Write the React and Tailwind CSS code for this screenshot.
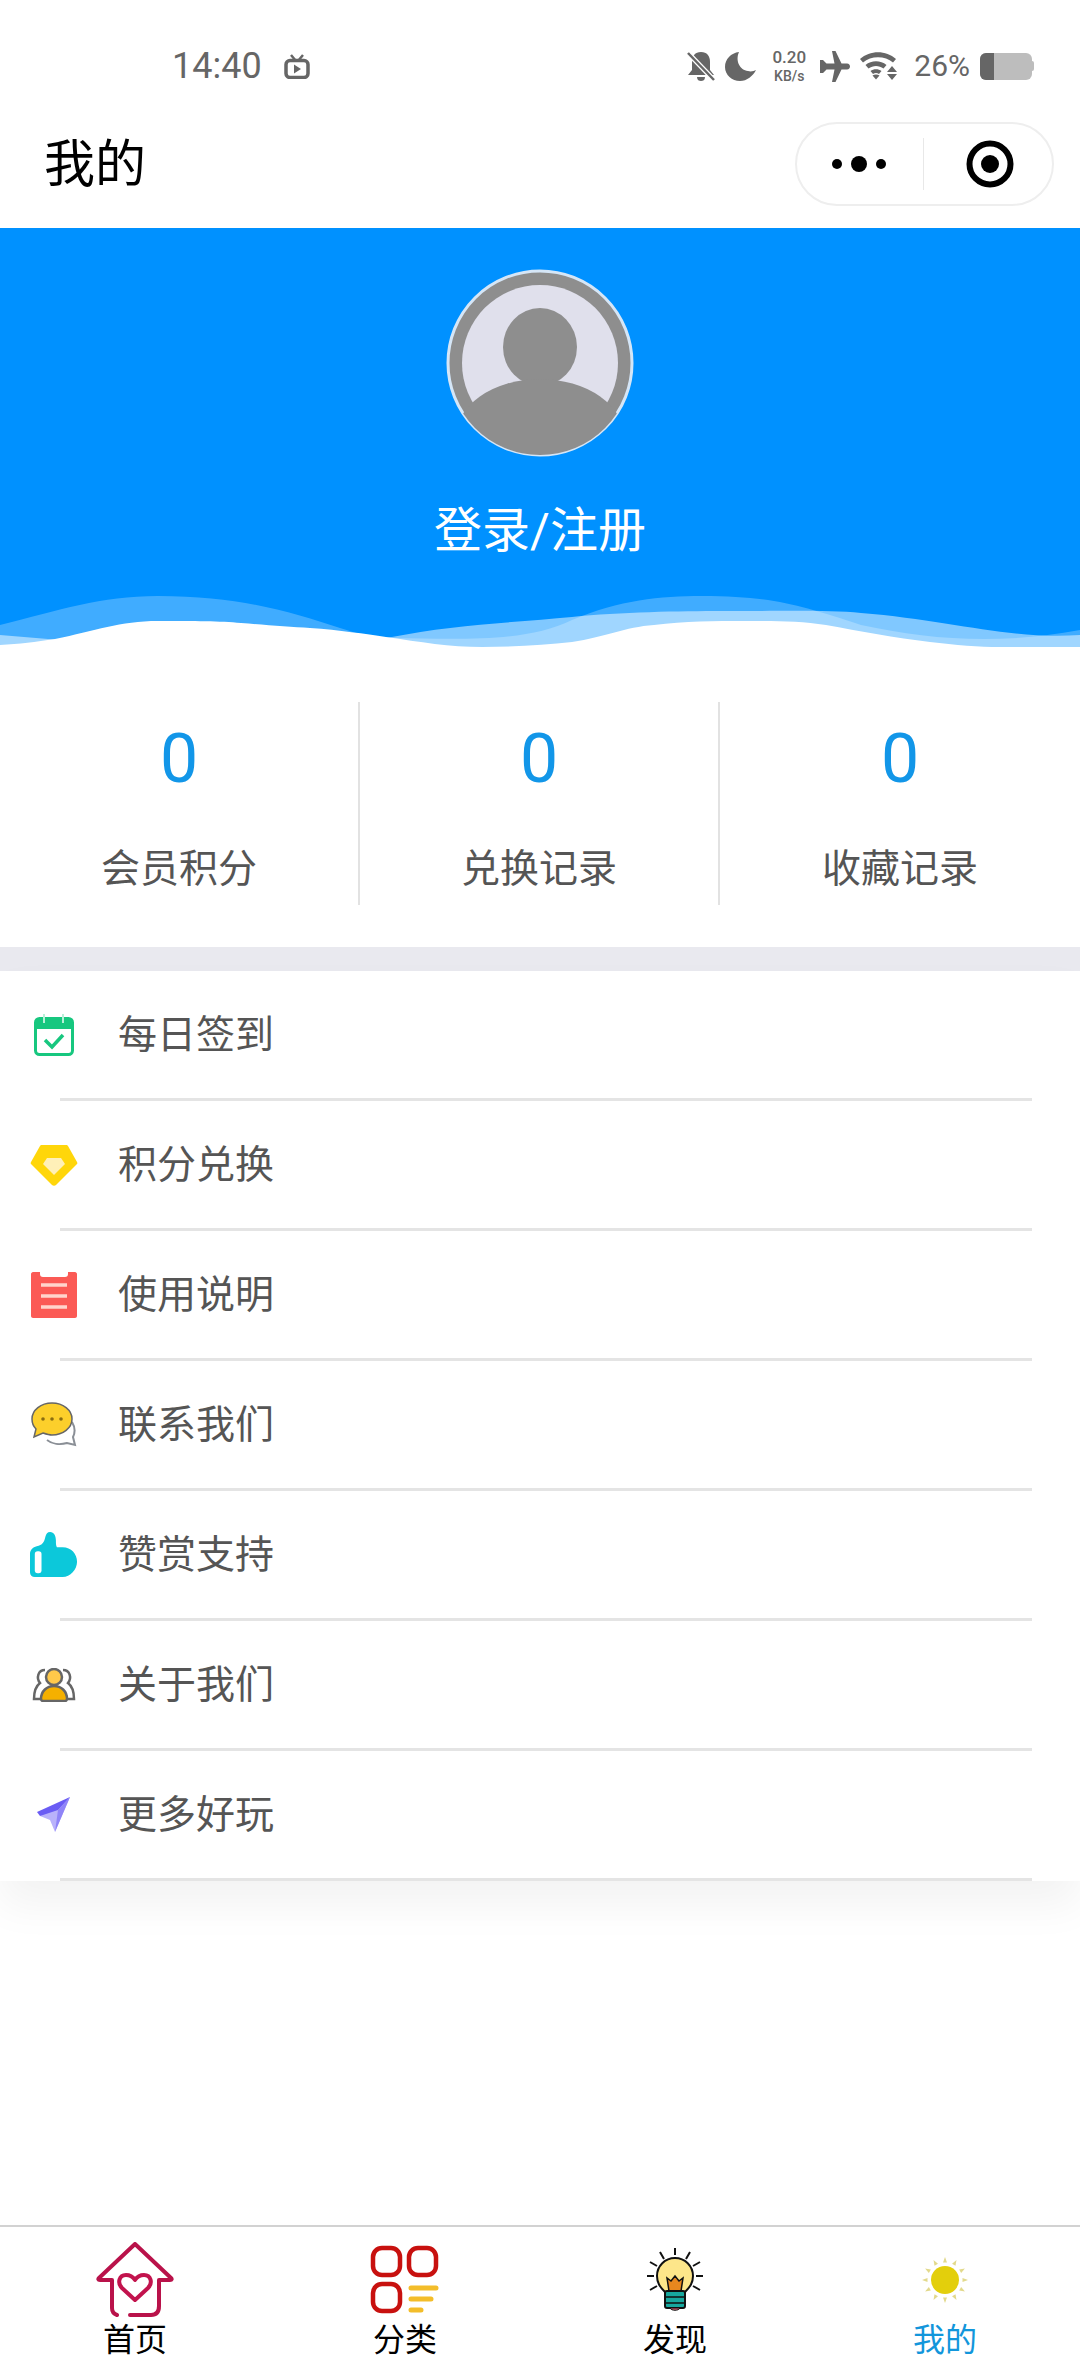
import React from 'react';

const stats = [
  { value: '0', label: '会员积分' },
  { value: '0', label: '兑换记录' },
  { value: '0', label: '收藏记录' }
];

// Status bar icons
const TvIcon = () => (
  <svg width="26" height="25" viewBox="0 0 26 25" className="ml-[22px]">
    <path d="M7 1l5 6M19 1l-5 6" stroke="#666" strokeWidth="2.5" fill="none" />
    <rect x="2" y="6.500" width="22" height="17" rx="4" fill="none" stroke="#666" strokeWidth="3.500" />
    <path d="M10 10.500l7 4.500-7 4.500z" fill="#666" />
  </svg>
);

const BellOffIcon = () => (
  <svg width="28" height="31" viewBox="0 0 28 31">
    <path d="M14 1c-6 0-9 4-9 10v8l-4 5h26l-4-5v-8c0-6-3-10-9-10z" fill="#666" />
    <path d="M10 26c0 3 2 4 4 4s4-1 4-4z" fill="#666" />
    <path d="M1 2l26 27" stroke="#fff" strokeWidth="5" />
    <path d="M1 2l26 27" stroke="#666" strokeWidth="2.500" />
  </svg>
);

const MoonIcon = () => (
  <svg width="31" height="29" viewBox="0 0 31 29">
    <path d="M14 0C6 1 0 7 0 15c0 8 7 14 15 14 7 0 13-5 16-11-2 1-5 2-8 1C15 18 10 9 14 0z" fill="#666" />
  </svg>
);

const PlaneIcon = () => (
  <svg width="30" height="31" viewBox="0 0 30 31">
    <path d="M12 0h3.500l6 12.500H27c2 0 3 1.500 3 3s-1 3-3 3h-5.500l-6 12.500H12l2.500-12.500H6.500L3 22H0V9h3l3.500 3.500h8z" fill="#666" />
  </svg>
);

const WifiIcon = () => (
  <svg width="37" height="28" viewBox="0 0 37 28">
    <path d="M0 7C10-2 26-2 36 7l-3 3.500C25 3.500 11 3.500 3 10.500z" fill="#666" />
    <path d="M5.500 13c6-5 15-5 21 0l-3 3.500c-4.500-3.500-10.500-3.500-15 0z" fill="#666" />
    <path d="M10.500 19c3-2.500 8-2.500 11 0l-2.500 3c-2-1.500-4-1.500-6 0z" fill="#666" />
    <path d="M12.500 23.500c2-1.200 5-1.200 7 0l-3.500 4z" fill="#666" />
    <path d="M32 14l5 6h-10zM27 22h10l-5 6z" fill="#666" />
  </svg>
);

const BatteryIcon = () => (
  <div className="ml-[10px] flex items-center">
    <div className="flex h-[27px] w-[52px] overflow-hidden rounded-[6px] bg-[#bdbdbd]">
      <div className="h-full w-[14px] bg-[#666]"></div>
    </div>
    <div className="h-[10px] w-[2px] rounded-r bg-[#bdbdbd]"></div>
  </div>
);

// Menu icons
const CalendarIcon = () => (
  <svg width="40" height="42" viewBox="0 0 40 42">
    <rect x="1.500" y="4.500" width="37" height="36" rx="4" fill="#fff" stroke="#17c77f" strokeWidth="3" />
    <path d="M1 9c0-3 2-5 5-5h28c3 0 5 2 5 5v6H1z" fill="#17c77f" />
    <path d="M10 0v9M29 0v9" stroke="#b8f0d8" strokeWidth="2" />
    <path d="M11 26l7 7 11-12" fill="none" stroke="#17c77f" strokeWidth="3.500" />
  </svg>
);

const DiamondIcon = () => (
  <svg width="48" height="42" viewBox="0 0 48 42">
    <path d="M12 1c-1 0-1.500 0-2 1L1 18c-.5 1-.5 1.500 0 2l21 21c1 1 3 1 4 0l21-21c.5-.5.5-1 0-2L38 2c-.5-1-1-1-2-1z" fill="#ffd60a" />
    <path d="M17 14h14l4 6-11 11-11-11z" fill="#fff0b8" />
  </svg>
);

const ClipboardIcon = () => (
  <svg width="46" height="46" viewBox="0 0 46 46">
    <path d="M2 0h7v2c0 2 1 3 3 3h22c2 0 3-1 3-3V0h7c1 0 2 1 2 2v42c0 1-1 2-2 2H2c-1 0-2-1-2-2V2c0-1 1-2 2-2z" fill="#fb5a55" />
    <path d="M10 13h26M10 24h26M10 35h26" stroke="#ffd5cc" strokeWidth="3.500" />
  </svg>
);

const ChatIcon = () => (
  <svg width="46" height="45" viewBox="0 0 46 45">
    <path d="M41 20c3 5 3 11 1 15l2 8-8-2c-7 2-15 1-20-3" fill="none" stroke="#8a8f96" strokeWidth="2" />
    <path d="M21 1C10 1 1 8 1 17c0 4 1 7 4 10l-2 8 9-4c3 1 6 2 9 2 11 0 20-7 20-16S32 1 21 1z" fill="#fccf2b" stroke="#666" strokeWidth="1.500" />
    <circle cx="12" cy="17" r="1.800" fill="#8a6d10" />
    <circle cx="21" cy="17" r="1.800" fill="#8a6d10" />
    <circle cx="30" cy="17" r="1.800" fill="#8a6d10" />
  </svg>
);

const ThumbIcon = () => (
  <svg width="50" height="50" viewBox="0 0 50 50">
    <path d="M21 1c4 0 6 4 6 9 0 3 0 5 1 7h6c9 0 15 7 15 15s-7 16-15 16H5c-3 0-5-2-5-5V24c0-4 3-7 7-8 6-1 8-5 9-10 1-3 2-5 5-5z" fill="#0cc8da" />
    <rect x="5" y="21" width="7" height="23" rx="3" fill="#fff" />
  </svg>
);

const PeopleIcon = () => (
  <svg width="44" height="34" viewBox="0 0 44 34">
    <path d="M13 2C6 2 4 10 8 15 4 18 2 23 2 31h6" fill="none" stroke="#666" strokeWidth="2.500" />
    <path d="M31 2c7 0 9 8 5 13 4 3 6 8 6 16h-6" fill="none" stroke="#666" strokeWidth="2.500" />
    <circle cx="22" cy="9" r="8" fill="#ffc94a" stroke="#666" strokeWidth="2.500" />
    <path d="M22 18c-7 0-13 5-13 13 0 1 1 2 2 2h22c1 0 2-1 2-2 0-8-6-13-13-13z" fill="#f5b000" stroke="#666" strokeWidth="2.500" />
  </svg>
);

const SendIcon = () => (
  <svg width="36" height="38" viewBox="0 0 36 38" className="blur-[0.6px]">
    <path d="M34 1L4 20l10 4 5 12z" fill="#b9b2fb" />
    <path d="M34 1L1 16l3 4 18-6z" fill="#6a5cf4" />
    <path d="M34 1L22 14l-3 22z" fill="#8f84f8" />
  </svg>
);

// Tab bar icons
const HomeIcon = () => (
  <svg width="78" height="76" viewBox="0 0 78 76">
    <path d="M16 38H4c-2 0-2-1-1-2L39 2l36 34c1 1 1 2-1 2H63v26c0 6-3 9-8 9H34M16 38v28c0 4 2 6 5 7" fill="none" stroke="#b9124a" strokeWidth="4" strokeLinejoin="round" strokeLinecap="round" />
    <path d="M39 58L26 46c-5-5-3-13 4-13 4 0 7 2 9 5 2-3 5-5 9-5 7 0 9 8 4 13z" fill="none" stroke="#c2134d" strokeWidth="4" strokeLinejoin="round" />
  </svg>
);

const CategoryIcon = () => (
  <svg width="70" height="70" viewBox="0 0 70 70">
    <rect x="3" y="3" width="27" height="27" rx="9" fill="none" stroke="#c8110f" strokeWidth="4.500" />
    <rect x="39" y="3" width="27" height="27" rx="9" fill="none" stroke="#c8110f" strokeWidth="4.500" />
    <rect x="3" y="39" width="27" height="27" rx="9" fill="none" stroke="#c8110f" strokeWidth="4.500" />
    <path d="M41 43h25M41 54h20M41 65h10" stroke="#f3bd2a" strokeWidth="5" strokeLinecap="round" />
  </svg>
);

const BulbIcon = () => (
  <svg width="56" height="66" viewBox="0 0 56 66">
    <path d="M28 1v7M13 5l4 7M43 5l-4 7M3 15l7 4M53 15l-7 4M0 29h7M56 29h-7M3 43l7-4M53 43l-7-4" stroke="#111" strokeWidth="2" />
    <path d="M28 11c-10 0-18 8-18 18 0 7 3 11 8 16v3h20v-3c5-5 8-9 8-16 0-10-8-18-18-18z" fill="#fde68a" stroke="#111" strokeWidth="2" />
    <path d="M22 44l-2-13 4 3 4-5 4 5 4-3-2 13z" fill="#e8871e" stroke="#111" strokeWidth="1.500" />
    <rect x="18" y="44" width="20" height="17" rx="2" fill="#17a89e" stroke="#111" strokeWidth="2" />
    <path d="M18 50h20M18 56h20" stroke="#111" strokeWidth="1.500" />
    <path d="M23 61c1 3 9 3 10 0z" fill="#d9657a" stroke="#111" strokeWidth="1" />
  </svg>
);

const SunIcon = () => (
  <svg width="46" height="46" viewBox="0 0 46 46">
    <circle cx="23" cy="23" r="14" fill="#e3cf0c" />
    {[0, 30, 60, 90, 120, 150, 180, 210, 240, 270, 300, 330].map(deg => (
      <path key={deg} d="M21 5.500L23 0l2 5.500z" fill="#e2d98c" transform={`rotate(${deg} 23 23)`} />
    ))}
  </svg>
);

const menuItems = [
  { label: '每日签到', icon: <CalendarIcon /> },
  { label: '积分兑换', icon: <DiamondIcon /> },
  { label: '使用说明', icon: <ClipboardIcon /> },
  { label: '联系我们', icon: <ChatIcon /> },
  { label: '赞赏支持', icon: <ThumbIcon /> },
  { label: '关于我们', icon: <PeopleIcon /> },
  { label: '更多好玩', icon: <SendIcon /> }
];

const tabs = [
  { label: '首页', icon: <HomeIcon /> },
  { label: '分类', icon: <CategoryIcon /> },
  { label: '发现', icon: <BulbIcon /> },
  { label: '我的', icon: <SunIcon />, active: true }
];

const App = () => {
  return (
    <div className="flex min-h-[2376px] w-[1080px] flex-col bg-white font-[Roboto,'Noto_Sans_CJK_SC',sans-serif]">
      {/* Status bar */}
      <div className="flex h-[112px] items-center pt-[20px] pl-[172px] pr-[46px] text-[#666]">
        <span className="text-[36px] leading-none">14:40</span>
        <TvIcon />
        <div className="ml-auto flex items-center">
          <BellOffIcon />
          <div className="ml-[10px]"><MoonIcon /></div>
          <div className="ml-[15px] flex w-[36px] flex-col items-center font-medium leading-none">
            <span className="text-[17px]">0.20</span>
            <span className="mt-[3px] text-[14px]">KB/s</span>
          </div>
          <div className="ml-[13px]"><PlaneIcon /></div>
          <div className="ml-[10px]"><WifiIcon /></div>
          <span className="ml-[17px] text-[30px] leading-none">26%</span>
          <BatteryIcon />
        </div>
      </div>

      {/* Title bar */}
      <div className="flex h-[116px] items-center pb-[12px] pl-[44px] pr-[26px]">
        <h1 className="text-[51px] font-normal leading-none text-black">我的</h1>
        <div className="ml-auto flex h-[84px] w-[259px] items-center rounded-full border-2 border-[#eeeeee]">
          <div className="flex flex-1 justify-center pr-[2px]">
            <svg width="54" height="18" viewBox="0 0 54 18">
              <circle cx="5" cy="9" r="5" fill="#000" />
              <circle cx="27" cy="9" r="8" fill="#000" />
              <circle cx="49" cy="9" r="5" fill="#000" />
            </svg>
          </div>
          <div className="h-[52px] w-px bg-[#e8e8e8]"></div>
          <div className="flex flex-1 justify-center pl-[4px]">
            <svg width="48" height="48" viewBox="0 0 48 48">
              <circle cx="24" cy="24" r="20.500" fill="none" stroke="#000" strokeWidth="6" />
              <circle cx="24" cy="24" r="9" fill="#000" />
            </svg>
          </div>
        </div>
      </div>

      {/* Profile header */}
      <div className="relative flex h-[422px] flex-col items-center bg-[#0091ff] pt-[41px]">
        <svg width="188" height="188" viewBox="0 0 188 188">
          <defs>
            <clipPath id="avatarClip">
              <circle cx="94" cy="94" r="92" />
            </clipPath>
          </defs>
          <circle cx="94" cy="94" r="92" fill="#8e8e8e" stroke="#d5e6f7" strokeWidth="3" />
          <circle cx="94" cy="94" r="78" fill="#e0e0ec" />
          <g clipPath="url(#avatarClip)">
            <ellipse cx="94" cy="78" rx="37" ry="39" fill="#8e8e8e" />
            <ellipse cx="94" cy="170" rx="85" ry="60" fill="#8e8e8e" />
          </g>
        </svg>
        <p className="mt-[46px] text-[48px] leading-[56px] text-white">登录/注册</p>
        <svg className="absolute bottom-0 left-0" width="1080" height="60" viewBox="0 590 1080 60" preserveAspectRatio="none">
          <path d="M0 625C60 610 100 596 158 596c82 0 132 16 182 32 25 8 40 12 52 10 88 2 138 2 180-18 48-20 88-24 130-24 68 0 98 9 159 29 69 15 139 20 219 5v20H0z" fill="#fff" fillOpacity="0.25" />
          <path d="M0 635l60 5c40 8 240 10 332-3 58-12 128-15 180-20 48-5 108-6 151-6 67 0 107-1 138 2 89 7 149 27 219 22v15H0z" fill="#fff" fillOpacity="0.5" />
          <path d="M0 645C20 644 35 642 55 639 95 631 120 621 158 621 195 621 220 621 241 623 265 625 290 627 310 628 340 630 365 634 386 637 420 642 450 647 482 647 515 647 545 645 572 642 605 637 625 627 654 625 685 621 715 621 744 621 775 621 800 621 826 625 860 631 895 638 930 642 955 645 980 647 999 647L1080 647V650H0z" fill="#fff" />
        </svg>
      </div>

      {/* Stats */}
      <div className="grid grid-cols-3 pt-[52px] pb-[42px]">
        {stats.map((stat, index) => (
          <div
            key={stat.label}
            className={`flex h-[203px] flex-col items-center pt-[19px] ${index < 2 ? 'border-r-2 border-[#e2e2e2]' : ''}`}
          >
            <span className="text-[68px] leading-[76px] text-[#1296e8]">{stat.value}</span>
            <span className="mt-[50px] text-[39px] leading-[44px] text-[#555]">{stat.label}</span>
          </div>
        ))}
      </div>
      <div className="h-[24px] bg-[#e9e9ef]"></div>

      {/* Menu list */}
      <div className="bg-white shadow-[0_24px_40px_rgba(0,0,0,0.05)]">
        {menuItems.map(item => (
          <div key={item.label} className="flex h-[130px] flex-col">
            <div className="flex flex-1 items-center pl-[30px]">
              <div className="flex w-[48px] justify-center">{item.icon}</div>
              <span className="ml-[40px] pt-[2px] text-[39px] leading-none text-[#555]">{item.label}</span>
            </div>
            <div className="ml-[60px] mr-[48px] h-[3px] bg-[#e4e4e4]"></div>
          </div>
        ))}
      </div>

      <div className="flex-1"></div>

      {/* Tab bar */}
      <div className="grid h-[151px] grid-cols-4 border-t-2 border-[#d2d2d2] bg-white pt-[15px]">
        {tabs.map(tab => (
          <div key={tab.label} className="flex flex-col items-center">
            <div className="flex h-[76px] items-center justify-center">{tab.icon}</div>
            <span className={`mt-[2px] text-[32px] leading-[40px] ${tab.active ? 'text-[#1296db]' : 'text-black'}`}>
              {tab.label}
            </span>
          </div>
        ))}
      </div>
    </div>
  );
};

export default App;
